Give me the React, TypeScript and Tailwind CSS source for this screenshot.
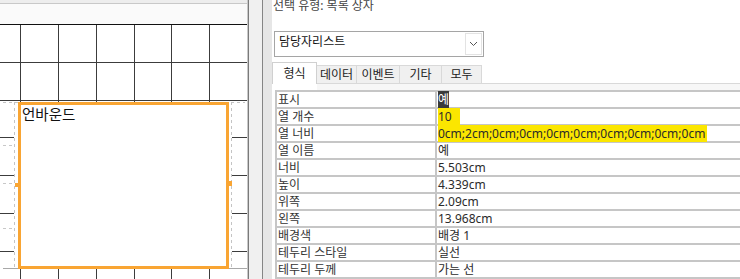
import React from 'react';

const ROWS: { label: string; value: React.ReactNode }[] = [
  { label: '표시', value: <span className="bg-[#3a3a3a] text-white">예</span> },
  { label: '열 개수', value: <span className="bg-[#fbe600] pr-[8px]">10</span> },
  {
    label: '열 너비',
    value: <span className="bg-[#fbe600] pr-[2px]">0cm;2cm;0cm;0cm;0cm;0cm;0cm;0cm;0cm;0cm</span>,
  },
  { label: '열 이름', value: '예' },
  { label: '너비', value: '5.503cm' },
  { label: '높이', value: '4.339cm' },
  { label: '위쪽', value: '2.09cm' },
  { label: '왼쪽', value: '13.968cm' },
  { label: '배경색', value: '배경 1' },
  { label: '테두리 스타일', value: '실선' },
  { label: '테두리 두께', value: '가는 선' },
];

const TABS = [
  { label: '데이터', w: 'w-[40px]' },
  { label: '이벤트', w: 'w-[43px]' },
  { label: '기타', w: 'w-[42px]' },
  { label: '모두', w: 'w-[40px]' },
];

const GRID_X = [20.5, 58.5, 96.5, 134.5, 171.5, 209.5];
const GRID_Y = [37.5, 75.5, 112.5, 150.5, 188.5, 226.5];

function DesignGrid() {
  return (
    <svg width="247" height="254" className="block">
      {GRID_X.map((x) => (
        <line key={x} x1={x} y1={0} x2={x} y2={254} stroke="#3c3c3c" strokeWidth="1" />
      ))}
      {GRID_Y.map((y) => (
        <line key={y} x1={0} y1={y} x2={247} y2={y} stroke="#3c3c3c" strokeWidth="1" />
      ))}
      {/* layout guide */}
      <rect x="14" y="77" width="218" height="166" fill="#fff" />
      <line x1="3" y1="77.5" x2="245" y2="77.5" stroke="#c4c4c4" strokeDasharray="3 3" />
      <line x1="14.5" y1="77" x2="14.5" y2="243" stroke="#c4c4c4" strokeDasharray="3 3" />
      <line x1="231.5" y1="77" x2="231.5" y2="243" stroke="#c4c4c4" strokeDasharray="3 3" />
      <line x1="3" y1="243.5" x2="247" y2="243.5" stroke="#a8a8a8" />
      {[120.5, 158.5, 203.5].map((y) => (
        <line key={y} x1="3" y1={y} x2="13" y2={y} stroke="#c8c8c8" strokeDasharray="3 3" />
      ))}
    </svg>
  );
}

export default function App() {
  return (
    <div className="flex h-[279px] w-[740px] overflow-hidden bg-white font-['Noto_Sans','Noto_Sans_CJK_KR',sans-serif] text-[12px] text-[#2b2b2b]">
      {/* Design surface */}
      <div className="flex w-[248px] flex-shrink-0 flex-col border-r border-[#c8c8c8]">
        <div className="h-[4px] border-b border-[#c8c8c8] bg-[#ededed]" />
        <div className="h-[20px] bg-[#fafafa]" />
        <div className="h-px bg-[#111]" />
        <div className="relative flex-1">
          <DesignGrid />
          <div className="absolute left-[18px] top-[77px] h-[167px] w-[211px] border-[3px] border-[#f9a533] bg-white">
            <div className="pl-px text-[14.5px] leading-[18px] text-[#111]">언바운드</div>
            <div className="absolute -left-[6px] top-[78px] h-[4px] w-[3px] bg-[#f9a533]" />
            <div className="absolute -right-[6px] top-[76px] h-[5px] w-[3px] bg-[#f9a533]" />
          </div>
        </div>
      </div>

      {/* Splitter */}
      <div className="w-px flex-shrink-0 bg-[#7a7a7a]" />
      <div className="w-[13px] flex-shrink-0 bg-[#f0f0f0]" />
      <div className="w-px flex-shrink-0 bg-[#858585]" />
      <div className="w-[9px] flex-shrink-0 bg-[#e6e6e6]" />

      {/* Property sheet */}
      <div className="flex min-w-0 flex-1 flex-col">
        <div className="h-[32px] pl-px">
          <div className="-mt-[2px] leading-[15px] text-[#444]">선택 유형: 목록 상자</div>
        </div>

        <div className="ml-[2px] flex h-[26px] w-[210px] items-stretch border border-[#a5a5a5] bg-white">
          <div className="flex-1 pl-[4px] pt-[2px] leading-[16px] text-[#111]">담당자리스트</div>
          <div className="my-px mr-px flex w-[17px] items-center justify-center border border-[#e3e3e3]">
            <svg width="9" height="6" viewBox="0 0 9 6">
              <path d="M1 1l3.5 3.5L8 1" fill="none" stroke="#555" strokeWidth="1" />
            </svg>
          </div>
        </div>

        {/* Tabs */}
        <div className="mt-[5px] flex h-[22px] items-end">
          <div className="flex h-[22px] w-[45px] items-center justify-center border-x border-t border-[#d0d0d0] bg-white text-[#222]">
            형식
          </div>
          {TABS.map((t) => (
            <div
              key={t.label}
              className={`flex h-[19px] ${t.w} items-center justify-center border-b border-r border-t border-[#d9d9d9] bg-[#f0f0f0] text-[#222]`}
            >
              {t.label}
            </div>
          ))}
          <div className="h-full flex-1 border-b border-[#d9d9d9]" />
        </div>
        <div className="flex h-[6px]">
          <div className="w-[45px] bg-white" />
          <div className="flex-1 bg-[#f7f7f7]" />
        </div>

        {/* Property grid */}
        <div className="ml-[3px] border-l-2 border-t-2 border-[#c6c6c6]">
          {ROWS.map((r) => (
            <div key={r.label} className="flex h-[17px] border-b-2 border-[#c6c6c6] leading-[15px]">
              <div className="w-[160px] flex-shrink-0 whitespace-nowrap border-r-2 border-[#c6c6c6] pl-px text-[#333]">
                {r.label}
              </div>
              <div className="flex-1 whitespace-nowrap pl-px">{r.value}</div>
            </div>
          ))}
        </div>
      </div>
    </div>
  );
}
